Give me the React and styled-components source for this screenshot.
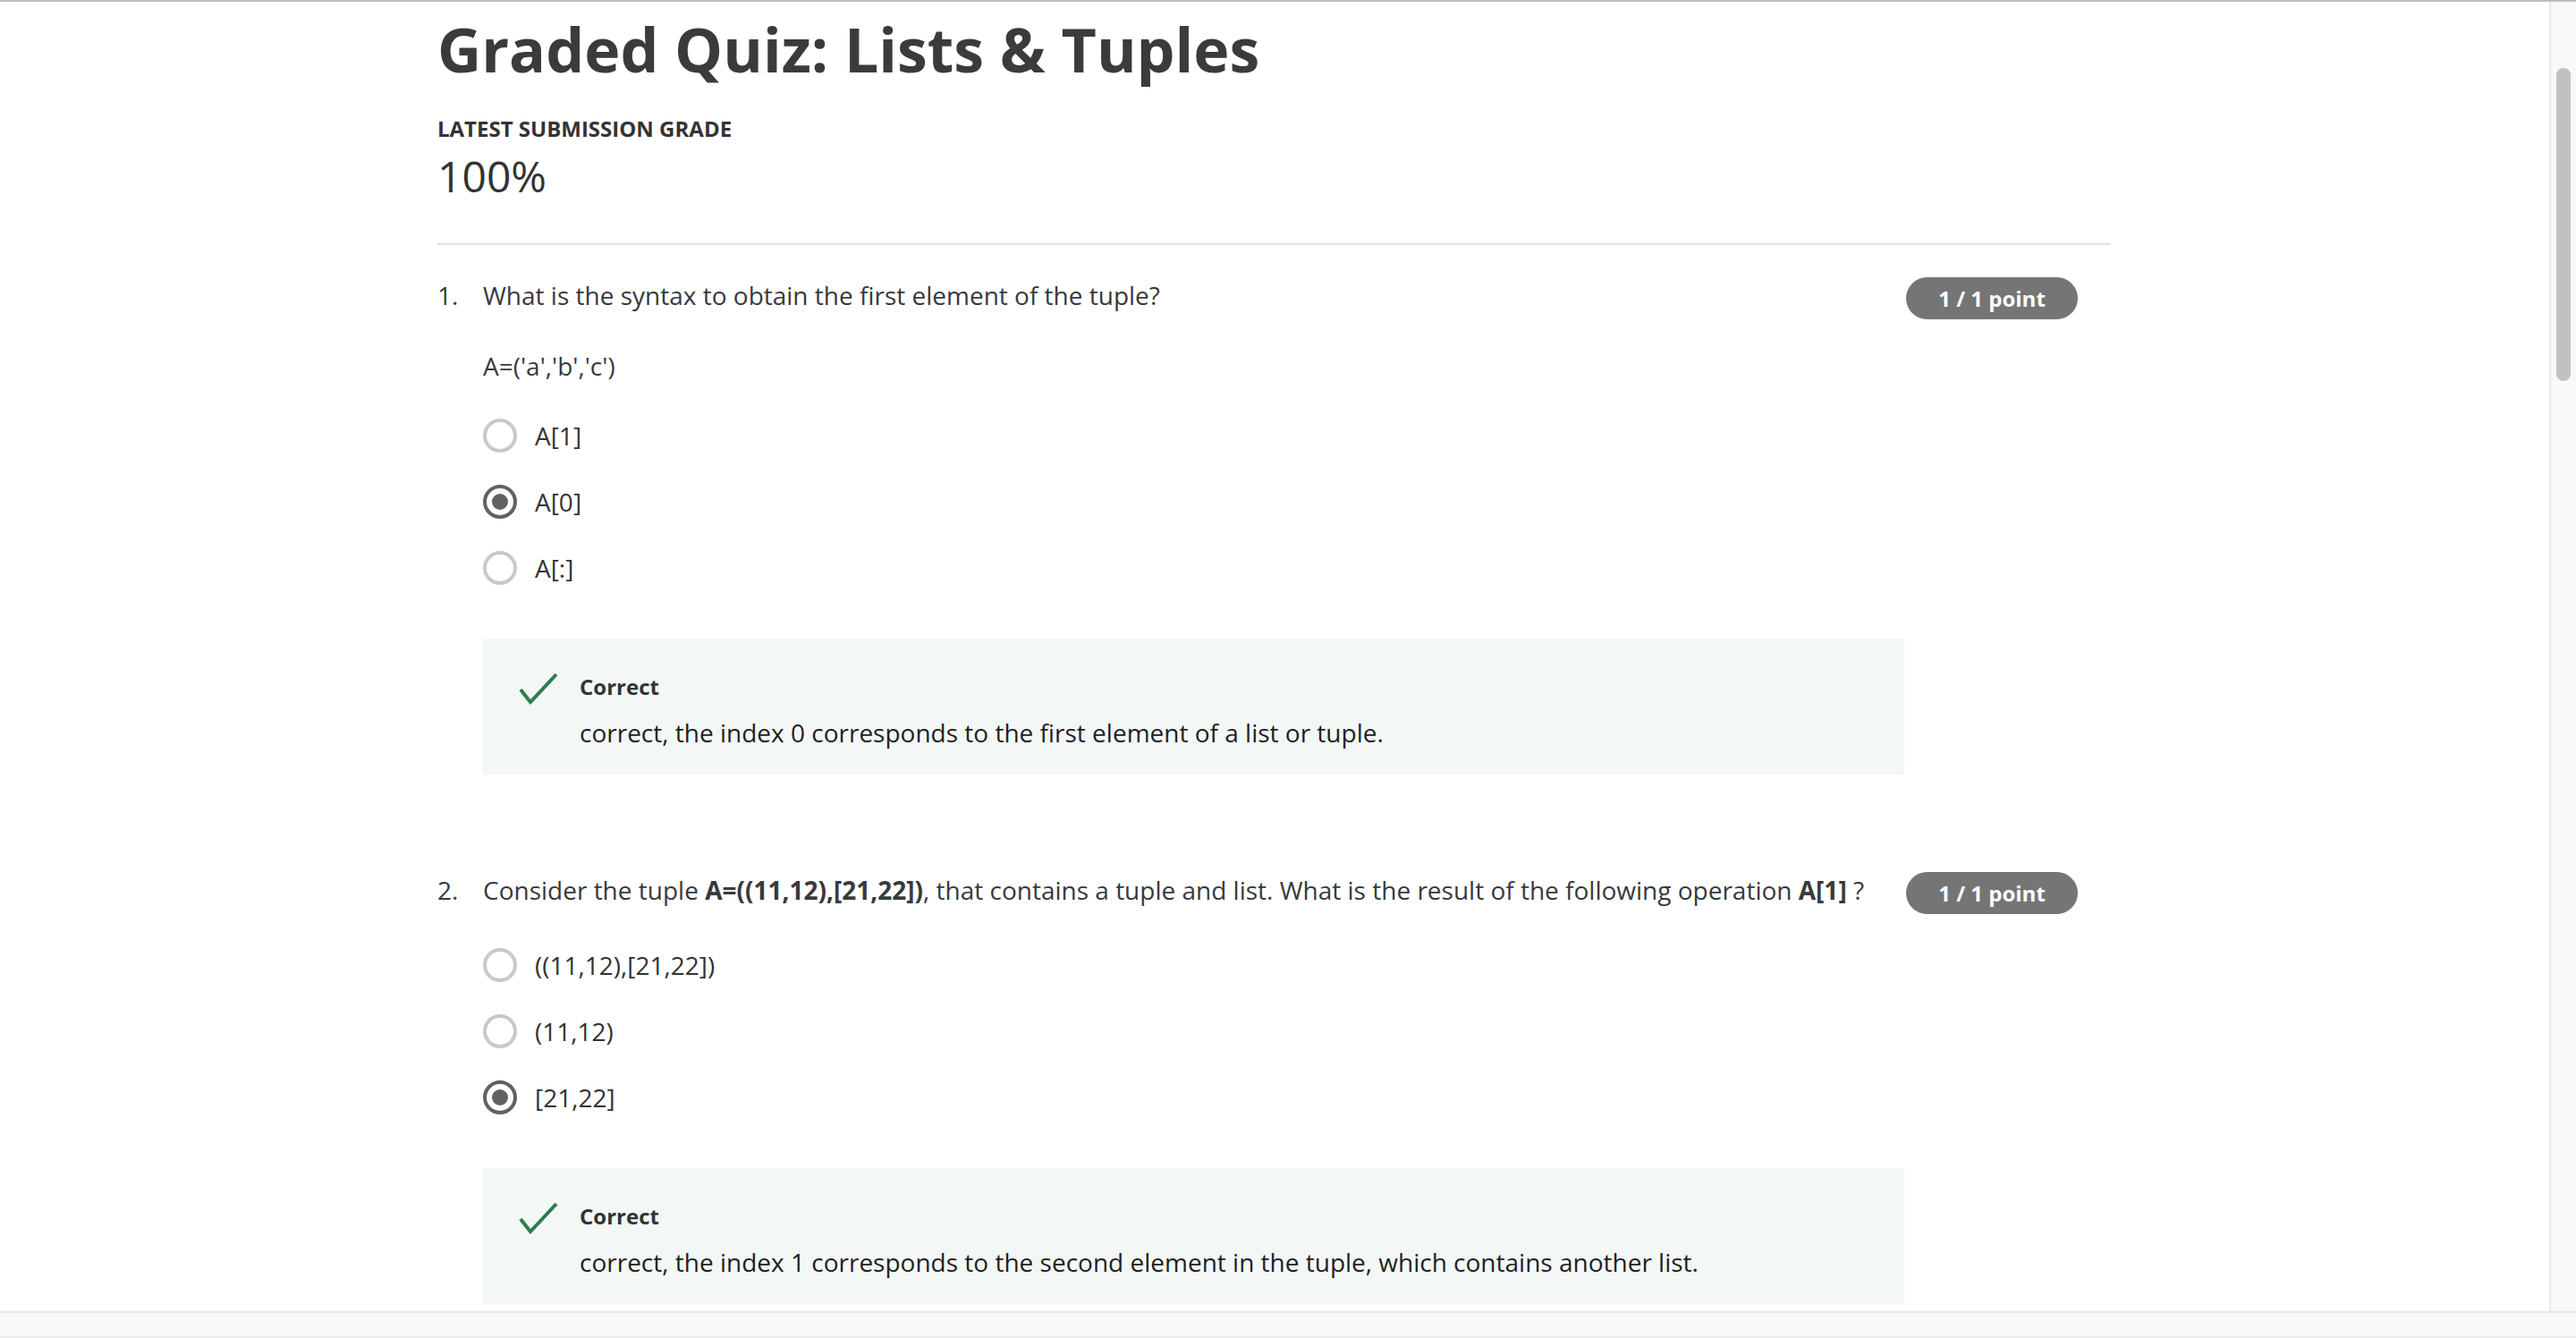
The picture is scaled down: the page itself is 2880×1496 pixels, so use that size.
import React from 'react';
import styled, { createGlobalStyle } from 'styled-components';

const GlobalStyle = createGlobalStyle`
  html, body {
    margin: 0;
    padding: 0;
    height: 100%;
    overflow: hidden;
  }
  body {
    font-family: "Open Sans", "Liberation Sans", sans-serif;
    color: #373a3c;
    background: #fff;
  }
  * { box-sizing: border-box; }
`;

// window frame with the fake browser scrollbars
const Window = styled.div`
  height: 100vh;
  display: flex;
  flex-direction: column;
  border-top: 2px solid #bfbfbf;
`;

const Middle = styled.div`
  flex: 1;
  min-height: 0;
  display: flex;
`;

const Viewport = styled.main`
  flex: 1;
  min-width: 0;
  overflow: hidden;
`;

const VTrack = styled.div`
  width: 30px;
  flex-shrink: 0;
  background: #f8f8f8;
  border-left: 2px solid #e8e8e8;
  padding: 74px 6px 0 6px;
`;

const VThumb = styled.div`
  height: 350px;
  border-radius: 8px;
  background: #c1c1c1;
`;

const HTrack = styled.div`
  height: 30px;
  flex-shrink: 0;
  background: #f8f8f8;
  border-top: 2px solid #e6e6e6;
  border-bottom: 2px solid #ececec;
`;

// page content
const Content = styled.div`
  width: 1871px;
  margin-left: 489px;
  padding-top: 10px;
`;

const Header = styled.header`
  padding-bottom: 45px;
  border-bottom: 2px solid #e1e1e1;
`;

const Title = styled.h1`
  margin: 0;
  font-size: 68px;
  line-height: 85px;
  font-weight: 700;
  color: #3a3b3d;
`;

const GradeLabel = styled.div`
  margin-top: 31px;
  font-size: 24px;
  line-height: 32px;
  font-weight: 700;
  text-transform: uppercase;
  color: #333;
`;

const GradeValue = styled.div`
  margin-top: 7px;
  font-size: 48px;
  line-height: 60px;
  font-weight: 400;
  color: #333;
`;

const QuestionList = styled.div`
  padding-top: 36px;
`;

const Question = styled.section`
  display: flex;
  align-items: flex-start;
  padding-right: 37px;

  & + & {
    margin-top: 109px;
  }
`;

const Number = styled.div`
  width: 51px;
  flex-shrink: 0;
  font-size: 28px;
  line-height: 40px;
`;

const Body = styled.div`
  flex: 1;
  min-width: 0;
`;

const Prompt = styled.div`
  display: flex;
  flex-direction: column;
  gap: 39px;
  font-size: 28px;
  line-height: 40px;

  p { margin: 0; }
  strong { font-weight: 700; }
`;

const Badge = styled.div`
  flex-shrink: 0;
  width: 192px;
  height: 47px;
  margin-left: 2px;
  border-radius: 24px;
  background: #757575;
  color: #fff;
  font-size: 24px;
  line-height: 47px;
  font-weight: 700;
  text-align: center;
`;

const Options = styled.div`
  margin-top: ${p => p.$gap}px;
`;

const Option = styled.label`
  height: 74px;
  display: flex;
  align-items: center;
  gap: 20px;
  font-size: 28px;
  color: #333;
`;

const Radio = styled.span`
  width: 38px;
  height: 38px;
  border-radius: 50%;
  border: 4px solid ${p => (p.$checked ? '#616161' : '#c9c9c9')};
  display: flex;
  align-items: center;
  justify-content: center;

  &::after {
    content: '';
    width: 18px;
    height: 18px;
    border-radius: 50%;
    background: ${p => (p.$checked ? '#616161' : 'transparent')};
  }
`;

const Feedback = styled.div`
  margin-top: 42px;
  display: flex;
  align-items: flex-start;
  gap: 24px;
  padding: 38px 40px 27px;
  background: #f3f8f6;
`;

const FeedbackTitle = styled.div`
  font-size: 24px;
  line-height: 32px;
  font-weight: 700;
  color: #333;
`;

const FeedbackText = styled.div`
  margin-top: 15px;
  font-size: 28px;
  line-height: 40px;
  color: #1f1f1f;
`;

const Check = () => (
  <svg width="44" height="36" viewBox="0 0 44 36" fill="none">
    <path d="M2 19 L13 33 L42 2" stroke="#2f7d52" strokeWidth="4" />
  </svg>
);

const questions = [
  {
    prompt: [
      <>What is the syntax to obtain the first element of the tuple?</>,
      <>A=('a','b','c')</>,
    ],
    gap: 21,
    options: ['A[1]', 'A[0]', 'A[:]'],
    picked: 1,
    feedback: 'correct, the index 0 corresponds to the first element of a list or tuple.',
  },
  {
    prompt: [
      <>
        Consider the tuple <strong>A=((11,12),[21,22])</strong>, that contains a tuple and list.
        What is the result of the following operation <strong>A[1]</strong> ?
      </>,
    ],
    gap: 27,
    options: ['((11,12),[21,22])', '(11,12)', '[21,22]'],
    picked: 2,
    feedback: 'correct, the index 1 corresponds to the second element in the tuple, which contains another list.',
  },
];

const App = () => {
  return (
    <>
      <GlobalStyle />
      <Window>
        <Middle>
          <Viewport>
            <Content>
              <Header>
                <Title>Graded Quiz: Lists &amp; Tuples</Title>
                <GradeLabel>Latest Submission Grade</GradeLabel>
                <GradeValue>100%</GradeValue>
              </Header>
              <QuestionList>
                {questions.map((q, i) => (
                  <Question key={i}>
                    <Number>{i + 1}.</Number>
                    <Body>
                      <Prompt>
                        {q.prompt.map((p, j) => <p key={j}>{p}</p>)}
                      </Prompt>
                      <Options $gap={q.gap}>
                        {q.options.map((o, j) => (
                          <Option key={o}>
                            <Radio $checked={j === q.picked} />
                            {o}
                          </Option>
                        ))}
                      </Options>
                      <Feedback>
                        <Check />
                        <div>
                          <FeedbackTitle>Correct</FeedbackTitle>
                          <FeedbackText>{q.feedback}</FeedbackText>
                        </div>
                      </Feedback>
                    </Body>
                    <Badge>1 / 1 point</Badge>
                  </Question>
                ))}
              </QuestionList>
            </Content>
          </Viewport>
          <VTrack>
            <VThumb />
          </VTrack>
        </Middle>
        <HTrack />
      </Window>
    </>
  );
};

export default App;
